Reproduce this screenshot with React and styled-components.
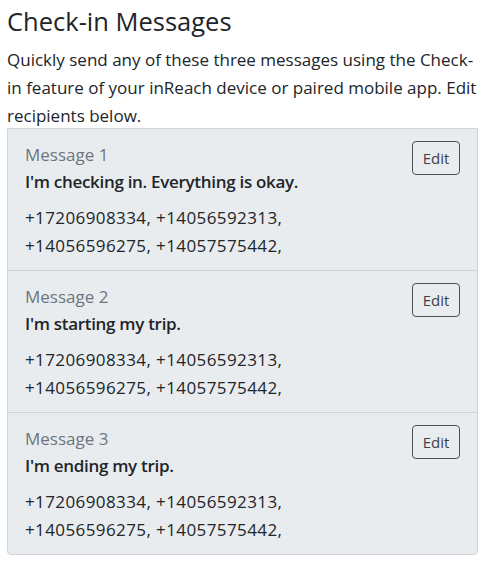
import styled, { createGlobalStyle } from "styled-components";

const messages = [
  { title: "Message 1", text: "I'm checking in. Everything is okay." },
  { title: "Message 2", text: "I'm starting my trip." },
  { title: "Message 3", text: "I'm ending my trip." },
];

const recipients = "+17206908334, +14056592313, +14056596275, +14057575442,";

export default function App() {
  return (
    <>
      <GlobalStyle />
      <Page>
        <Heading>Check-in Messages</Heading>
        <Intro>
          Quickly send any of these three messages using the Check-in feature
          of your inReach device or paired mobile app. Edit recipients below.
        </Intro>
        <Card>
          {messages.map((m) => (
            <Row key={m.title}>
              <Info>
                <Label>{m.title}</Label>
                <MessageText>{m.text}</MessageText>
                <Recipients>{recipients}</Recipients>
              </Info>
              <EditButton type="button">Edit</EditButton>
            </Row>
          ))}
        </Card>
      </Page>
    </>
  );
}

//#region Styles
const GlobalStyle = createGlobalStyle`
  body {
    margin: 0;
    background: #fff;
    font-family: "Open Sans", "Noto Sans", sans-serif;
    color: #212529;
  }
`;

const Page = styled.div`
  padding: 5px 8px 0 7px;
`;

const Heading = styled.h2`
  margin: 0;
  font-size: 25.5px;
  font-weight: 400;
  line-height: 32px;
  color: #212529;
`;

const Intro = styled.p`
  margin: 8.5px 0 -3px;
  font-size: 17px;
  line-height: 28.35px;
`;

const Card = styled.div`
  background: #e9ecef;
  border: 1px solid #ced4da;
  border-radius: 0 0 4px 4px;
`;

const Row = styled.div`
  display: flex;
  align-items: flex-start;
  justify-content: space-between;
  padding: 12px 17px 10px;

  & + & {
    border-top: 1px solid #ced4da;
  }
`;

const Info = styled.div`
  display: flex;
  flex-direction: column;
`;

const Label = styled.div`
  font-size: 17px;
  line-height: 27px;
  color: #6c757d;
`;

const MessageText = styled.div`
  font-size: 17px;
  font-weight: 600;
  line-height: 27px;
  letter-spacing: -0.3px;
`;

const Recipients = styled.div`
  margin-top: 9px;
  max-width: 300px;
  font-size: 17px;
  line-height: 28px;
  letter-spacing: 0.4px;
`;

const EditButton = styled.button`
  width: 48px;
  height: 34px;
  padding: 0;
  background: transparent;
  border: 1px solid #495057;
  border-radius: 4px;
  font-family: inherit;
  font-size: 15px;
  color: #3d4247;
`;
//#endregion
